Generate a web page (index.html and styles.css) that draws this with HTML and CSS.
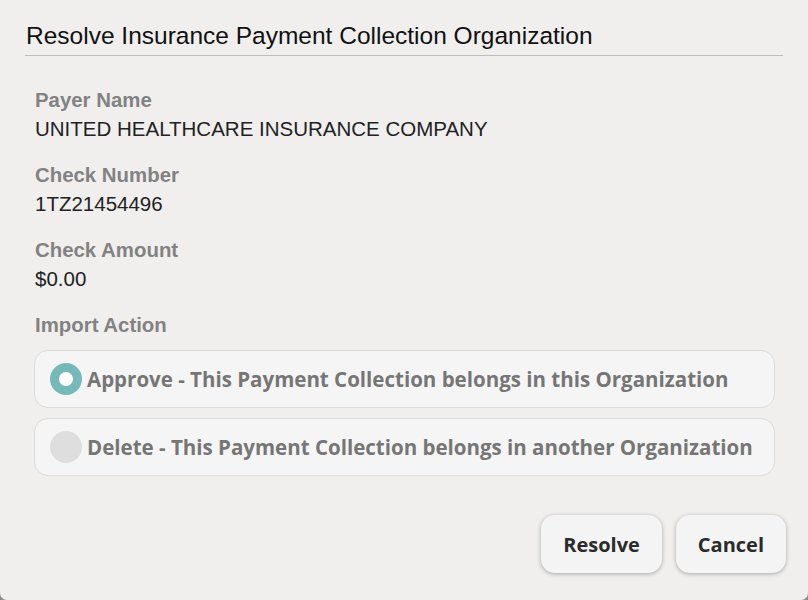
FILE: index.html
```html
<!DOCTYPE html>
<html>
<head>
<meta charset="utf-8">
<link rel="stylesheet" href="styles.css">
</head>
<body>
<div class="dialog">
  <h1 class="title">Resolve Insurance Payment Collection Organization</h1>
  <div class="content">
    <div class="field">
      <div class="label">Payer Name</div>
      <div class="value">UNITED HEALTHCARE INSURANCE COMPANY</div>
    </div>
    <div class="field">
      <div class="label">Check Number</div>
      <div class="value">1TZ21454496</div>
    </div>
    <div class="field">
      <div class="label">Check Amount</div>
      <div class="value">$0.00</div>
    </div>
    <div class="label">Import Action</div>
    <div class="options">
      <div class="option">
        <span class="radio checked"></span>
        <span class="opt-text">Approve - This Payment Collection belongs in this Organization</span>
      </div>
      <div class="option">
        <span class="radio"></span>
        <span class="opt-text">Delete - This Payment Collection belongs in another Organization</span>
      </div>
    </div>
  </div>
  <div class="actions">
    <button class="btn">Resolve</button>
    <button class="btn">Cancel</button>
  </div>
</div>
</body>
</html>
```
FILE: styles.css
```css
html, body {
  margin: 0;
  padding: 0;
  background: #8a8a8a;
  width: 808px;
  height: 600px;
  overflow: hidden;
}
.dialog {
  width: 808px;
  height: 600px;
  box-sizing: border-box;
  background: #f0efee;
  border-radius: 0 0 7px 7px;
  padding: 0 22px 0 25px;
  display: flex;
  flex-direction: column;
}
.title {
  margin: 0 3px 0 0;
  padding: 23px 0 6px 1px;
  font-family: "Liberation Sans", Arial, sans-serif;
  font-weight: normal;
  font-size: 24.5px;
  line-height: 26px;
  color: #111;
  border-bottom: 1px solid #bdbdbd;
}
.content {
  padding: 33px 11px 0 9px;
}
.field {
  margin-bottom: 24px;
}
.label {
  font-family: "Liberation Sans", Arial, sans-serif;
  font-weight: bold;
  font-size: 20.4px;
  line-height: 22px;
  color: #828282;
  padding-left: 1px;
}
.value {
  font-family: "Liberation Sans", Arial, sans-serif;
  font-size: 20.5px;
  line-height: 22px;
  color: #222;
  margin-top: 7px;
  padding-left: 1px;
}
.options {
  margin-top: 14px;
  display: flex;
  flex-direction: column;
  gap: 10px;
}
.option {
  height: 58px;
  box-sizing: border-box;
  border: 1px solid #dcdcdc;
  border-radius: 14px;
  background: #f5f5f5;
  display: flex;
  align-items: center;
  padding-left: 15px;
}
.radio {
  width: 32px;
  height: 32px;
  border-radius: 50%;
  background: #dedede;
  box-sizing: border-box;
  flex: none;
}
.radio.checked {
  background: #fff;
  border: 9px solid #76b9b9;
}
.opt-text {
  font-family: "Open Sans", sans-serif;
  font-weight: bold;
  font-size: 20.5px;
  color: #767676;
  margin-left: 5px;
}
.actions {
  margin-top: auto;
  margin-bottom: 27px;
  display: flex;
  justify-content: flex-end;
  gap: 14px;
}
.btn {
  height: 58px;
  padding: 0 22px;
  border: none;
  border-radius: 14px;
  background: #f4f4f4;
  box-shadow: 0 1px 4px rgba(0,0,0,0.3);
  font-family: "Open Sans", sans-serif;
  font-weight: bold;
  font-size: 20px;
  color: #2b2b2b;
}
```
